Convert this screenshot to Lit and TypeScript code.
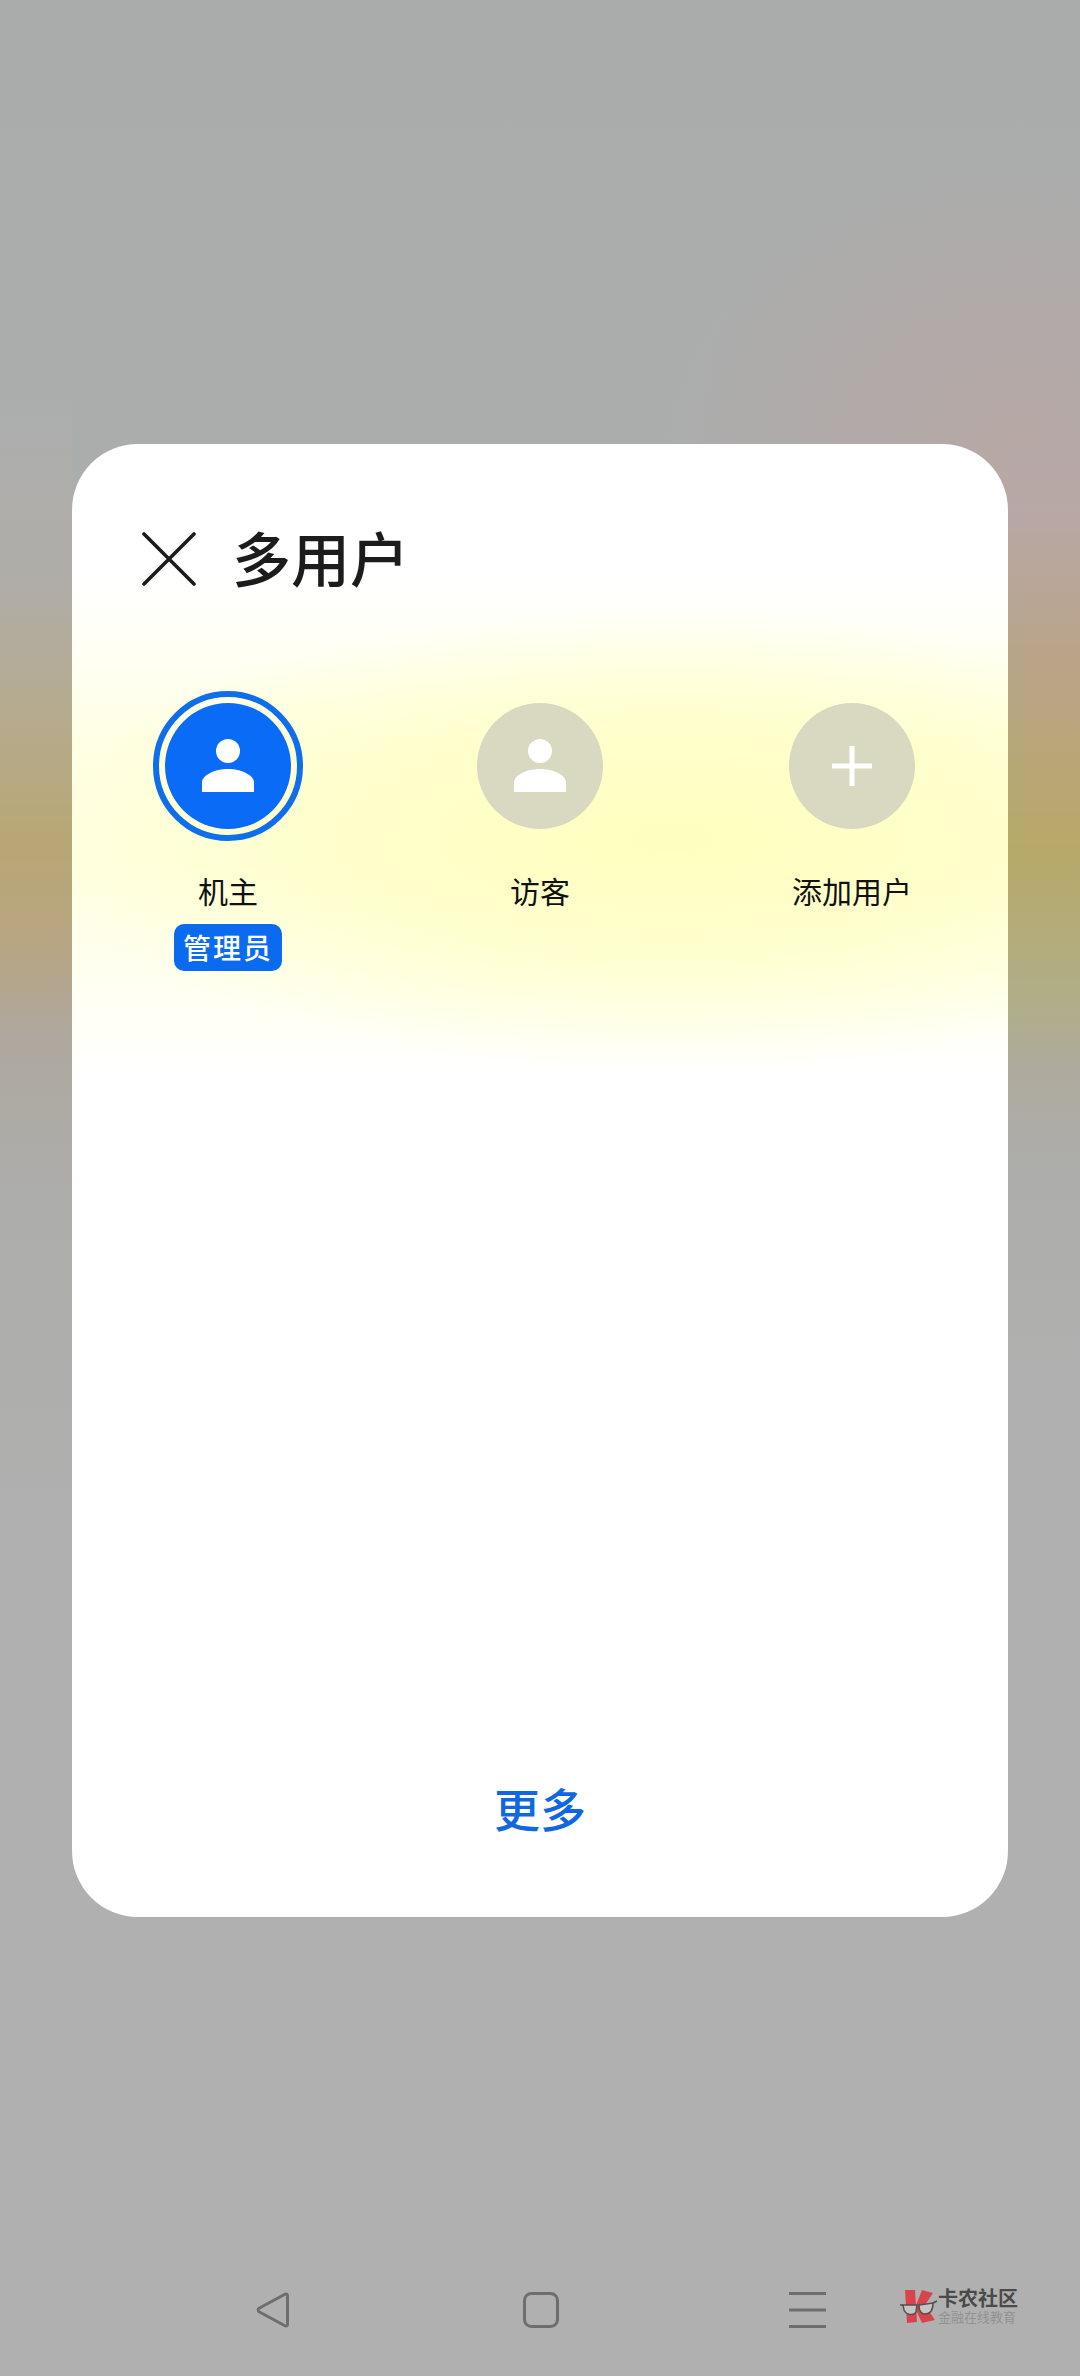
import { LitElement, html, css, svg } from "lit";
import { customElement } from "lit/decorators.js";

const person = svg`<circle cx="63" cy="48" r="12" fill="#fff"/><path d="M37 89V79.500C37 72 50 66 63 66C76 66 89 72 89 79.500V89Z" fill="#fff"/>`;

@customElement("app-root")
export class AppRoot extends LitElement {
  static styles = css`
    :host {
      display: block;
      width: 1080px;
      height: 2376px;
      overflow: hidden;
      position: relative;
      font-family: "Noto Sans CJK SC", "Noto Sans", sans-serif;
      color: #111;
      background:
        linear-gradient(#acaeae 0, #b0ada8 180px, #b4ac9a 255px, #b8a774 446px, #b8a583 542px, #aea89e 638px, #adadac 797px, #b0b0b0 100%) 0 400px / 72px 1200px no-repeat,
        linear-gradient(#b5a8a6 0, #b8a8a6 66px, #b9a48a 206px, #b8a868 403px, #b0ae88 556px, #aeaa9e 628px, #adaeac 733px, #b0b0b0 100%) 1008px 444px / 72px 1000px no-repeat,
        radial-gradient(ellipse 360px 300px at 1020px 450px, rgba(192, 163, 158, 0.55), transparent 100%),
        linear-gradient(#aaacac 0, #acaeae 600px, #b0b0b0 1300px, #b0b0b0 100%);
    }
    .page { display: flex; flex-direction: column; align-items: center; padding-top: 444px; }
    .card {
      width: 936px;
      height: 1473px;
      border-radius: 66px;
      display: flex;
      flex-direction: column;
      background:
        radial-gradient(ellipse 640px 230px at 600px 395px, rgba(254, 255, 188, 0.95) 0, rgba(254, 255, 188, 0.55) 55%, rgba(254, 255, 188, 0) 100%),
        linear-gradient(rgba(254, 255, 200, 0) 130px, rgba(254, 255, 200, 0.2) 210px, rgba(254, 255, 200, 0.5) 300px, rgba(254, 255, 200, 0.55) 420px, rgba(254, 255, 200, 0.25) 540px, rgba(254, 255, 200, 0) 640px),
        #fff;
    }
    .head { display: flex; align-items: center; gap: 36px; padding: 89px 0 0 70px; height: 52px; }
    .head svg { display: block; flex: none; }
    .title { font-size: 59px; line-height: 52px; margin-top: -5px; color: #1c1c1c; font-weight: 500; }
    .users { display: grid; grid-template-columns: repeat(3, 1fr); margin-top: 106px; }
    .user { display: flex; flex-direction: column; align-items: center; }
    .avatar {
      width: 126px; height: 126px; border-radius: 50%; background: #d9d9c1;
      margin: 12px 0; position: relative;
    }
    .avatar svg { display: block; }
    .avatar.on { background: #0a6bf6; }
    .avatar.on::before {
      content: ""; position: absolute; inset: -12px; border-radius: 50%; border: 6px solid #0f6eea;
    }
    .label { font-size: 30px; line-height: 40px; margin-top: 29px; color: #111; }
    .badge {
      margin-top: 14px; width: 108px; height: 47px; border-radius: 10px; background: #0a6bf0;
      color: #fff; font-size: 28px; line-height: 47px; text-align: center; letter-spacing: 2px;
      font-weight: 500;
    }
    .more {
      margin-top: auto; padding-bottom: 80px; text-align: center;
      font-size: 46px; line-height: 60px; color: #0f68e0; font-weight: 500;
    }
    .nav { display: flex; margin-top: 375px; height: 36px; position: relative; width: 1080px; padding-left: 256px; box-sizing: border-box; }
    .nav svg { display: block; flex: none; }
    .nav .sq { margin-left: 233px; }
    .nav .mn { margin-left: 230px; }
    .logo {
      position: absolute; left: 900px; top: -4px; width: 120px; height: 44px;
    }
    .logo svg { position: absolute; left: 0; top: 0; }
    .brand {
      position: absolute; left: 38px; top: 0; font-size: 20px; line-height: 20px; font-weight: 700; color: #4a4a4a; white-space: nowrap;
    }
    .sub {
      position: absolute; left: 38px; top: 22px; font-size: 13px; line-height: 14px; color: #929292; white-space: nowrap;
    }
  `;

  render() {
    return html`
      <div class="page">
        <div class="card">
          <div class="head">
            <svg width="54" height="54" viewBox="0 0 54 54"><path d="M2 2L52 52M52 2L2 52" stroke="#1c1c1c" stroke-width="3.600" stroke-linecap="round" fill="none"/></svg>
            <div class="title">多用户</div>
          </div>
          <div class="users">
            <div class="user">
              <div class="avatar on"><svg width="126" height="126" viewBox="0 0 126 126">${person}</svg></div>
              <div class="label">机主</div>
              <div class="badge">管理员</div>
            </div>
            <div class="user">
              <div class="avatar"><svg width="126" height="126" viewBox="0 0 126 126">${person}</svg></div>
              <div class="label">访客</div>
            </div>
            <div class="user">
              <div class="avatar"><svg width="126" height="126" viewBox="0 0 126 126"><path d="M63 43V83M43 63H83" stroke="#fff" stroke-width="5" fill="none"/></svg></div>
              <div class="label">添加用户</div>
            </div>
          </div>
          <div class="more">更多</div>
        </div>
        <div class="nav">
          <svg width="34" height="36" viewBox="0 0 34 36"><path d="M31.500 3.500C31.500 2 30 1.500 29 2.300L3 16.300C1.800 17.200 1.800 18.800 3 19.700L29 33.700C30 34.500 31.500 34 31.500 32.500Z" stroke="#6e6e6e" stroke-width="3" fill="none" stroke-linejoin="round"/></svg>
          <svg class="sq" width="36" height="36" viewBox="0 0 36 36"><rect x="1.500" y="1.500" width="33" height="33" rx="7" stroke="#6e6e6e" stroke-width="3" fill="none"/></svg>
          <svg class="mn" width="37" height="36" viewBox="0 0 37 36"><path d="M0 1.500H37M0 18H37M0 34.500H37" stroke="#6e6e6e" stroke-width="3" fill="none"/></svg>
          <div class="logo">
            <svg width="38" height="38" viewBox="0 0 38 38">
              <path d="M5 2H15L17 34L7 35Z" fill="#d9444c"/>
              <path d="M22 2L33 5L25 17L35 32L22 35L15 20Z" fill="#d9444c"/>
              <path d="M0 17H3M33 15L37 13" stroke="#505050" stroke-width="1.500" fill="none"/>
              <path d="M3 17H17L16 24C14 28 6 27 4 22Z" fill="#c5c5c5" stroke="#505050" stroke-width="1.500"/>
              <path d="M19 17L33 15C33 22 30 26 25 26C21 26 19 22 19 17Z" fill="#c5c5c5" stroke="#505050" stroke-width="1.500"/>
            </svg>
            <div class="brand">卡农社区</div>
            <div class="sub">金融在线教育</div>
          </div>
        </div>
      </div>
    `;
  }
}
